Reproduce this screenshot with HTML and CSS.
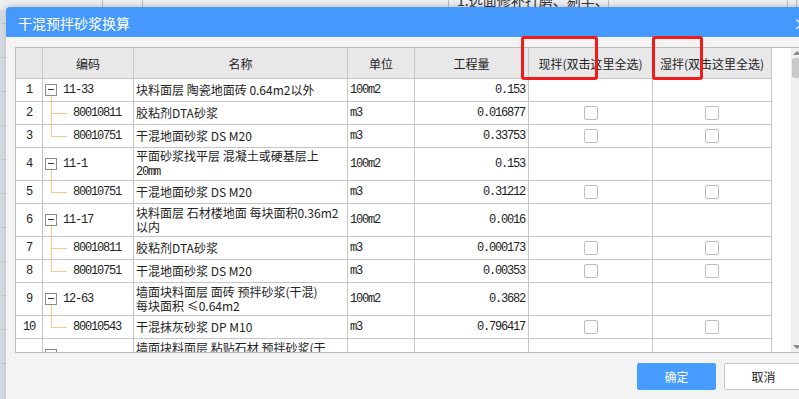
FILE: index.html
```html
<!DOCTYPE html>
<html>
  <head>
    <meta charset="utf-8">
    <title>干混预拌砂浆换算</title>
    <link rel="stylesheet" href="styles.css">
  </head>
  <body>
    <div class="backdrop">
      <div class="bg-head">
        <span class="bg-cell w103"></span>
        <span class="bg-cell w40"></span>
        <span class="bg-cell w306"></span>
        <span class="bg-cell w160">1.选面修补打磨、剔半、结晶</span>
        <span class="bg-cell w179"></span>
        <span class="bg-cell"></span>
      </div>
    </div>

    <div class="dialog">
      <div class="titlebar">
        <span>干混预拌砂浆换算</span>
        <span class="close">×</span>
      </div>

      <div class="dialog-body">
        <div class="grid">
          <div class="sheet">
            <div class="row head">
              <div class="cell"></div>
              <div class="cell">编码</div>
              <div class="cell">名称</div>
              <div class="cell">单位</div>
              <div class="cell">工程量</div>
              <div class="cell">现拌(双击这里全选)</div>
              <div class="cell">湿拌(双击这里全选)</div>
            </div>

            <div class="row">
              <div class="cell num mono">1</div>
              <div class="cell code parent mono"><span class="toggle"></span>11-33</div>
              <div class="cell name"><span>块料面层 陶瓷地面砖 0.64m2以外</span></div>
              <div class="cell unit mono">100m2</div>
              <div class="cell qty mono">0.153</div>
              <div class="cell"></div>
              <div class="cell"></div>
            </div>
            <div class="row">
              <div class="cell num mono">2</div>
              <div class="cell code child mono">80010811</div>
              <div class="cell name"><span>胶粘剂DTA砂浆</span></div>
              <div class="cell unit mono">m3</div>
              <div class="cell qty mono">0.016877</div>
              <div class="cell check"><span class="box"></span></div>
              <div class="cell check"><span class="box"></span></div>
            </div>
            <div class="row">
              <div class="cell num mono">3</div>
              <div class="cell code child last mono">80010751</div>
              <div class="cell name"><span>干混地面砂浆 DS M20</span></div>
              <div class="cell unit mono">m3</div>
              <div class="cell qty mono">0.33753</div>
              <div class="cell check"><span class="box"></span></div>
              <div class="cell check"><span class="box"></span></div>
            </div>

            <div class="row tall">
              <div class="cell num mono">4</div>
              <div class="cell code parent mono"><span class="toggle"></span>11-1</div>
              <div class="cell name"><span>平面砂浆找平层 混凝土或硬基层上<br><span class="mono">20mm</span></span></div>
              <div class="cell unit mono">100m2</div>
              <div class="cell qty mono">0.153</div>
              <div class="cell"></div>
              <div class="cell"></div>
            </div>
            <div class="row">
              <div class="cell num mono">5</div>
              <div class="cell code child last mono">80010751</div>
              <div class="cell name"><span>干混地面砂浆 DS M20</span></div>
              <div class="cell unit mono">m3</div>
              <div class="cell qty mono">0.31212</div>
              <div class="cell check"><span class="box"></span></div>
              <div class="cell check"><span class="box"></span></div>
            </div>

            <div class="row tall">
              <div class="cell num mono">6</div>
              <div class="cell code parent mono"><span class="toggle"></span>11-17</div>
              <div class="cell name"><span>块料面层 石材楼地面 每块面积0.36m2<br>以内</span></div>
              <div class="cell unit mono">100m2</div>
              <div class="cell qty mono">0.0016</div>
              <div class="cell"></div>
              <div class="cell"></div>
            </div>
            <div class="row">
              <div class="cell num mono">7</div>
              <div class="cell code child mono">80010811</div>
              <div class="cell name"><span>胶粘剂DTA砂浆</span></div>
              <div class="cell unit mono">m3</div>
              <div class="cell qty mono">0.000173</div>
              <div class="cell check"><span class="box"></span></div>
              <div class="cell check"><span class="box"></span></div>
            </div>
            <div class="row">
              <div class="cell num mono">8</div>
              <div class="cell code child last mono">80010751</div>
              <div class="cell name"><span>干混地面砂浆 DS M20</span></div>
              <div class="cell unit mono">m3</div>
              <div class="cell qty mono">0.00353</div>
              <div class="cell check"><span class="box"></span></div>
              <div class="cell check"><span class="box"></span></div>
            </div>

            <div class="row tall">
              <div class="cell num mono">9</div>
              <div class="cell code parent mono"><span class="toggle"></span>12-63</div>
              <div class="cell name"><span>墙面块料面层 面砖 预拌砂浆(干混)<br>每块面积 ≤0.64m2</span></div>
              <div class="cell unit mono">100m2</div>
              <div class="cell qty mono">0.3682</div>
              <div class="cell"></div>
              <div class="cell"></div>
            </div>
            <div class="row">
              <div class="cell num mono">10</div>
              <div class="cell code child last mono">80010543</div>
              <div class="cell name"><span>干混抹灰砂浆 DP M10</span></div>
              <div class="cell unit mono">m3</div>
              <div class="cell qty mono">0.796417</div>
              <div class="cell check"><span class="box"></span></div>
              <div class="cell check"><span class="box"></span></div>
            </div>

            <div class="row tall">
              <div class="cell num mono"></div>
              <div class="cell code parent mono"><span class="toggle"></span></div>
              <div class="cell name"><span>墙面块料面层 粘贴石材 预拌砂浆(干<br>混)</span></div>
              <div class="cell unit mono"></div>
              <div class="cell qty mono"></div>
              <div class="cell"></div>
              <div class="cell"></div>
            </div>
          </div>
          <div class="filler"></div>
          <div class="scrollbar">
            <span class="arrow up"></span>
            <span class="thumb"></span>
            <span class="track"></span>
            <span class="arrow down"></span>
          </div>
        </div>

        <div class="actions">
          <button class="btn primary">确定</button>
          <button class="btn">取消</button>
        </div>
      </div>

      <!-- annotation marks -->
      <div class="mark mark-a"></div>
      <div class="mark mark-b"></div>
    </div>
  </body>
</html>
```

FILE: styles.css
```css
html, body {
  margin: 0;
  height: 100%;
  overflow: hidden;
}

body {
  font-family: "Noto Sans CJK SC", sans-serif;
  font-size: 12px;
  color: #222;
  background: linear-gradient(90deg, #d3d8e2 0px, #e6e9ef 6px);
}

.mono {
  font-family: "Liberation Mono", "Noto Sans CJK SC", monospace;
  font-size: 12px;
  letter-spacing: -1.2px;
}

/* page behind the dialog */
.backdrop {
  height: 100%;
  background:
    repeating-linear-gradient(180deg, transparent 0px, transparent 33px, #c9cdd4 33px, #c9cdd4 34px);
}

.bg-head {
  display: flex;
  height: 20px;
  margin-top: -10px;
  background: #eceef2;
}

.bg-cell {
  flex: none;
  height: 20px;
  line-height: 20px;
  border-right: 1px solid #b9bcc2;
  font-size: 14px;
  padding-left: 8px;
  box-sizing: border-box;
  color: #333;
}
.w103 { width: 103px; }
.w40 { width: 40px; }
.w306 { width: 306px; }
.w160 { width: 160px; white-space: nowrap; overflow: hidden; }
.w179 { width: 179px; }

/* dialog */
.dialog {
  position: absolute;
  left: 6px;
  top: 7px;
  width: 806px;
  height: 420px;
  background: #f3f3f3;
  border-radius: 4px 4px 0 0;
  box-shadow: 0 0 6px rgba(0, 0, 0, 0.25);
}

.titlebar {
  display: flex;
  align-items: center;
  justify-content: space-between;
  height: 30px;
  padding: 2px 7px 0 12px;
  box-sizing: border-box;
  background: #4599fd;
  color: #fff;
  font-size: 14px;
  border-radius: 4px 4px 0 0;
}

.close {
  width: 12px;
  font-size: 16px;
}

.dialog-body {
  padding: 10px 9px 0;
}

.grid {
  display: flex;
  height: 304px;
  border: 1px solid #bdbdbd;
  background: #fff;
  overflow: hidden;
}

.sheet {
  width: 756px;
  flex: none;
}

.row {
  display: grid;
  grid-template-columns: 27px 91px 214px 67px 114px 124px 119px;
  height: 23px;
}

.row.tall {
  height: 33px;
}

.row.head {
  height: 31px;
}

.cell {
  position: relative;
  display: flex;
  align-items: center;
  border-right: 1px solid #c6c6c6;
  border-bottom: 1px solid #c6c6c6;
  box-sizing: border-box;
  white-space: nowrap;
  overflow: hidden;
}

.head .cell {
  justify-content: center;
  background: #e8e8e8;
  color: #222;
}

.num {
  justify-content: center;
}

.code {
  padding-left: 2px;
}

.name {
  padding: 0 2px;
  line-height: 14px;
  overflow: visible;
}

.unit {
  padding-left: 2px;
}

.qty {
  justify-content: flex-end;
  padding-right: 3px;
}

.check {
  justify-content: center;
}

.box {
  width: 14px;
  height: 14px;
  border: 1px solid #bdbdbd;
  border-radius: 2px;
  box-sizing: border-box;
  background: #fff;
}

/* tree */
.toggle {
  position: relative;
  width: 12px;
  height: 12px;
  margin-right: 6px;
  border: 1px solid #8c8c8c;
  box-sizing: border-box;
  background: #fff;
}

.toggle::after {
  content: "";
  position: absolute;
  left: 2px;
  right: 2px;
  top: 4px;
  height: 1px;
  background: #333;
}

.parent::after {
  content: "";
  position: absolute;
  left: 8px;
  top: calc(50% + 6px);
  bottom: -1px;
  width: 1px;
  background: #fcc78b;
}

.child {
  padding-left: 30px;
}

.child::before {
  content: "";
  position: absolute;
  left: 8px;
  top: 0;
  bottom: -1px;
  width: 1px;
  background: #fcc78b;
}

.child.last::before {
  bottom: 50%;
}

.child::after {
  content: "";
  position: absolute;
  left: 8px;
  top: 50%;
  width: 16px;
  height: 1px;
  background: #fcc78b;
}

.filler {
  flex: 1;
}

.scrollbar {
  position: relative;
  display: flex;
  flex-direction: column;
  align-items: center;
  width: 11px;
  flex: none;
  background: #f0f0f0;
}

.arrow {
  width: 0;
  height: 0;
  border-left: 4px solid transparent;
  border-right: 4px solid transparent;
  margin: 3px 0;
}

.arrow.up {
  border-bottom: 4px solid #8a8a8a;
}

.arrow.down {
  border-top: 4px solid #8a8a8a;
}

.thumb {
  width: 9px;
  height: 20px;
  border-radius: 3px;
  background: #c9c9c9;
}

.track {
  flex: 1;
}

.actions {
  display: flex;
  justify-content: flex-end;
  gap: 8px;
  margin-top: 10px;
}

.btn {
  width: 79px;
  height: 27px;
  font-family: "Noto Sans CJK SC", sans-serif;
  font-size: 12px;
  color: #222;
  background: #fff;
  border: 1px solid #c8c8c8;
  border-radius: 2px;
}

.btn.primary {
  background: #479cff;
  border-color: #479cff;
  color: #fff;
}

.mark {
  position: absolute;
  top: 29px;
  height: 44px;
  border: 3px solid #f21b1b;
  border-radius: 3px;
  box-sizing: border-box;
}

.mark-a {
  left: 515px;
  width: 77px;
}

.mark-b {
  left: 646px;
  width: 51px;
}
```
